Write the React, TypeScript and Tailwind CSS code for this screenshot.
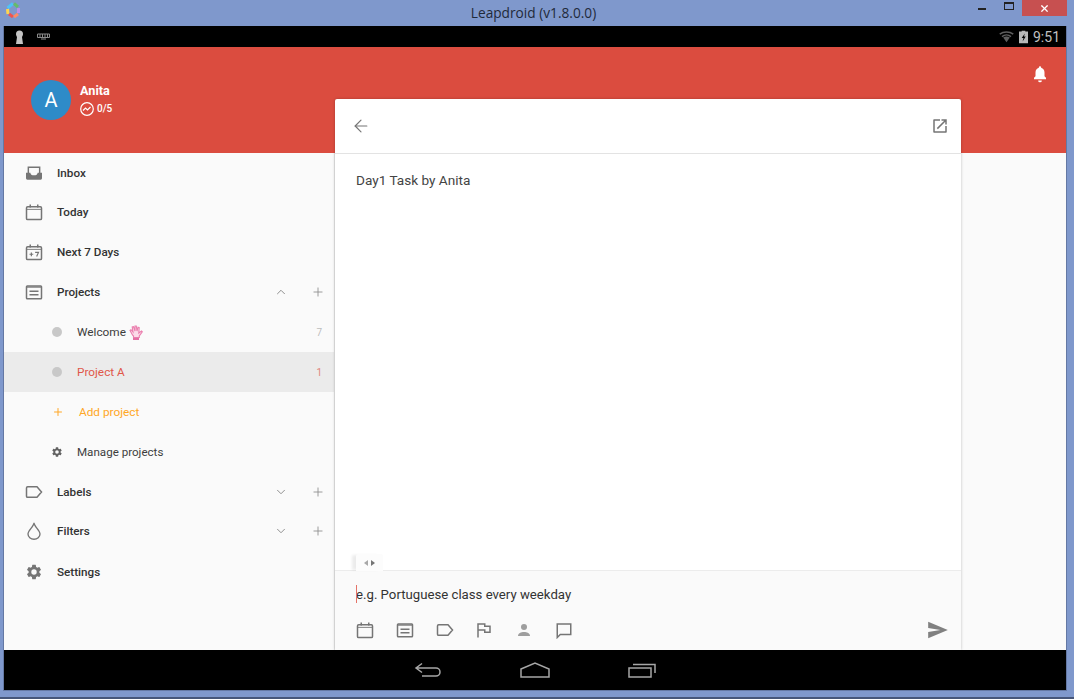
import { ArrowLeft, ChevronDown, ChevronUp, Plus, X } from "lucide-react";
import type { ReactNode } from "react";

const gearPath =
  "M19.14 12.94c.04-.3.06-.61.06-.94s-.02-.64-.07-.94l2.03-1.58a.49.49 0 0 0 .12-.61l-1.92-3.32a.49.49 0 0 0-.59-.22l-2.39.96a7 7 0 0 0-1.62-.94l-.36-2.54a.48.48 0 0 0-.48-.41h-3.84a.47.47 0 0 0-.47.41l-.36 2.54c-.59.24-1.13.57-1.62.94l-2.39-.96a.48.48 0 0 0-.59.22L2.74 8.87a.47.47 0 0 0 .12.61l2.03 1.58c-.05.3-.09.63-.09.94s.02.64.07.94l-2.03 1.58a.49.49 0 0 0-.12.61l1.92 3.32c.12.22.37.29.59.22l2.39-.96c.5.38 1.03.7 1.62.94l.36 2.54c.05.24.24.41.48.41h3.84c.24 0 .44-.17.47-.41l.36-2.54c.59-.24 1.13-.56 1.62-.94l2.39.96c.22.08.47 0 .59-.22l1.92-3.32a.47.47 0 0 0-.12-.61l-2.01-1.58zM12 15.6A3.6 3.6 0 1 1 12 8.4a3.6 3.6 0 0 1 0 7.2z";

function Icon({ size = 18, className = "", children }: { size?: number; className?: string; children: ReactNode }) {
  return (
    <svg width={size} height={size} viewBox="0 0 24 24" fill="none" stroke="currentColor" strokeWidth={2} className={className}>
      {children}
    </svg>
  );
}

const InboxIcon = () => (
  <svg width="20" height="18" viewBox="0 0 27 24" fill="none" stroke="currentColor" strokeWidth={2.2}>
    <path d="M5 13V3.500h17V13" />
    <path d="M1.500 11.500H8c.2 2.500 2 4 5.500 4s5.300-1.500 5.500-4h6.500V20a2 2 0 0 1-2 2h-20a2 2 0 0 1-2-2z" fill="currentColor" stroke="none" />
  </svg>
);

const CalendarIcon = ({ children }: { children?: ReactNode }) => (
  <Icon>
    <rect x="2" y="5" width="20" height="17" rx="1.500" />
    <path d="M2 8.500h20" strokeWidth={1.2} />
    <path d="M7 2v4M17 2v4" />
    {children}
  </Icon>
);

const ProjectsIcon = () => (
  <Icon>
    <rect x="2" y="4" width="20" height="17" rx="1" />
    <path d="M2 5.500h20" strokeWidth={1.5} />
    <path d="M6 11h12M6 15.500h12" />
  </Icon>
);

const LabelIcon = () => (
  <Icon>
    <path d="M3.500 5H16l6 7-6 7H3.500A1.500 1.500 0 0 1 2 17.500v-11A1.500 1.500 0 0 1 3.500 5z" />
  </Icon>
);

const DropIcon = () => (
  <Icon>
    <path d="M12 1C12 6 4 11 4 16a8 7 0 0 0 16 0C20 11 12 6 12 1z" strokeWidth={1.8} />
  </Icon>
);

const GearIcon = ({ size = 18 }: { size?: number }) => (
  <svg width={size} height={size} viewBox="0 0 24 24" fill="currentColor">
    <path d={gearPath} />
  </svg>
);

function NavRow({ icon, label, right, height = "h-10" }: { icon: ReactNode; label: string; right?: ReactNode; height?: string }) {
  return (
    <div className={`flex ${height} items-center pl-[21px] pr-[9px]`}>
      <span className="flex w-[18px] justify-center text-[#757575]">{icon}</span>
      <span className="ml-[14px] flex-1 text-[11.700px] font-medium leading-[16px] text-[#333333]">{label}</span>
      {right}
    </div>
  );
}

function ExpandControls({ open }: { open?: boolean }) {
  return (
    <span className="flex items-center gap-[23px] text-[#8f8f8f]">
      {open ? <ChevronUp size={14} strokeWidth={1.7} /> : <ChevronDown size={14} strokeWidth={1.7} />}
      <Plus size={14} strokeWidth={1.5} />
    </span>
  );
}

function ProjectRow({ label, count, active, children }: { label: string; count: string; active?: boolean; children?: ReactNode }) {
  return (
    <div className={`flex h-10 items-center pl-[48px] pr-[12px] ${active ? "bg-[#ebebeb]" : ""}`}>
      <span className="h-[10px] w-[10px] rounded-full bg-[#c8c8c8]" />
      <span className={`ml-[15px] text-[11.800px] leading-[16px] ${active ? "text-[#e0574a]" : "text-[#3d3d3d]"}`}>{label}</span>
      {children}
      <span className={`ml-auto text-[10px] ${active ? "text-[#e0857c]" : "text-[#bdbdbd]"}`}>{count}</span>
    </div>
  );
}

function Sidebar() {
  return (
    <aside className="w-[331px] shrink-0 border-r border-[#e6e6e6] bg-[#fafafa]">
      <NavRow height="h-[39px]" icon={<InboxIcon />} label="Inbox" />
      <NavRow icon={<CalendarIcon />} label="Today" />
      <NavRow
        icon={
          <CalendarIcon>
            <path d="M6 15h5M8.500 12.500v5M13.500 12.500h4.500l-2.500 5.500" strokeWidth={1.6} />
          </CalendarIcon>
        }
        label="Next 7 Days"
      />
      <NavRow icon={<ProjectsIcon />} label="Projects" right={<ExpandControls open />} />
      <ProjectRow label="Welcome" count="7">
        <svg width="14" height="15" viewBox="0 0 14 15" fill="#fbdbe8" stroke="#ea7fae" strokeWidth="1.1" className="ml-[3px]">
          <path d="M3.500 10 1 5.500l1-.8 2 2.300-.8-5 1.300-.3L6 6V1h1.300L8 6l1-3.800 1.200.4L9.800 8l2.700-2 .8.9-3 4.100v1.500H4.500V11z" />
          <path d="M4 14h6" strokeWidth="1.8" stroke="#e0609a" />
        </svg>
      </ProjectRow>
      <ProjectRow label="Project A" count="1" active />
      <div className="flex h-10 items-center pl-[48px] text-[#ffa726]">
        <Plus size={12} strokeWidth={2} />
        <span className="ml-[15px] text-[11.800px] leading-[16px]">Add project</span>
      </div>
      <div className="flex h-10 items-center pl-[47px]">
        <span className="text-[#616161]">
          <GearIcon size={12} />
        </span>
        <span className="ml-[14px] text-[11.600px] leading-[16px] text-[#3d3d3d]">Manage projects</span>
      </div>
      <NavRow height="h-[39px]" icon={<LabelIcon />} label="Labels" right={<ExpandControls />} />
      <NavRow icon={<DropIcon />} label="Filters" right={<ExpandControls />} />
      <NavRow height="h-[41px]" icon={<GearIcon />} label="Settings" />
    </aside>
  );
}

function TaskCard() {
  return (
    <section className="absolute left-[331px] top-[52px] flex h-[551px] w-[626px] flex-col rounded-t-[2px] bg-white shadow-[0_0_3px_rgba(0,0,0,0.25)]">
      <header className="flex h-[55px] shrink-0 items-center justify-between border-b border-[#e3e3e3] pl-[16px] pr-[12px] text-[#757575]">
        <ArrowLeft size={20} strokeWidth={1.4} />
        <svg width="18" height="18" viewBox="0 0 24 24" fill="currentColor">
          <path d="M19 19H5V5h7V3H4a1 1 0 0 0-1 1v16a1 1 0 0 0 1 1h16a1 1 0 0 0 1-1v-8h-2v7zM14 3v2h3.590l-9.830 9.830 1.410 1.410L19 6.410V10h2V3h-7z" />
        </svg>
      </header>
      <div className="flex-1 pl-[21px] pt-[18px] text-[13.600px] leading-[16px] text-[#444444]">Day1 Task by Anita</div>
      <div className="relative h-[80px] shrink-0 border-t border-[#ececec] bg-[#fafafa]">
        <div className="absolute -top-[17px] left-[21px] flex h-[17px] w-[27px] items-center justify-center gap-[3px] rounded-t-[2px] bg-[#fcfcfc] shadow-[-5px_0_3px_-1px_rgba(0,0,0,0.08)]">
          <span className="h-0 w-0 border-y-[3px] border-r-[4px] border-y-transparent border-r-[#a8a8a8]" />
          <span className="h-0 w-0 border-y-[3px] border-l-[4px] border-y-transparent border-l-[#757575]" />
        </div>
        <div className="relative flex h-[47px] items-center pl-[21px] text-[13.200px] text-[#333333]">
          <span className="absolute left-[21px] top-[14px] h-[18px] w-px bg-[#e57368]" />
          e.g. Portuguese class every weekday
        </div>
        <div className="flex h-6 items-center pl-[21px] pr-[13px] text-[#757575]">
          <span className="flex w-[217px] justify-between">
            <CalendarIcon />
            <ProjectsIcon />
            <LabelIcon />
            <Icon>
              <path d="M4 22V4h9v3h7v8h-7v-3H4" />
            </Icon>
            <svg width="18" height="18" viewBox="0 0 24 24" fill="#9e9e9e">
              <circle cx="12" cy="8" r="4" />
              <path d="M4 20c0-4 4-5.500 8-5.500s8 1.500 8 5.500z" />
            </svg>
            <Icon>
              <path d="M3 4h18v14H7l-4 4z" />
            </Icon>
          </span>
          <svg width="20" height="18" viewBox="0 0 24 22" fill="#808080" className="ml-auto">
            <path d="M0 21 24 11 0 1v7.500L15 11 0 13.500z" />
          </svg>
        </div>
      </div>
    </section>
  );
}

function StatusBar() {
  return (
    <div className="flex h-[21px] shrink-0 items-center bg-black pl-[11px] pr-[6px]">
      <svg width="9" height="14" viewBox="0 0 9 14" fill="#c4c4c4">
        <path d="M1 4a3.500 3.500 0 0 1 7 0c0 1.500-.7 2.300-1 3l1 7H1l1-7c-.3-.7-1-1.500-1-3z" />
      </svg>
      <svg width="13" height="7" viewBox="0 0 13 7" fill="none" stroke="#8a8a8a" strokeWidth="1" className="ml-[13px]">
        <path d="M.5 1h12v3.500H.5zM3 1v3.500M5.500 1v3.500M8 1v3.500M10.500 1v3.500M4 6h5" />
      </svg>
      <svg width="15" height="12" viewBox="0 0 16 12" fill="none" stroke="#5e5e5e" strokeWidth="1.6" className="ml-auto">
        <path d="M.8 3C4.800-.1 11.200-.1 15.200 3M3.200 5.600C6 3.300 10 3.300 12.800 5.600" />
        <path d="M4.500 6.500c2-1.500 5-1.500 7 0L8 11.500z" fill="#5e5e5e" stroke="none" />
      </svg>
      <svg width="9" height="14" viewBox="0 0 10 14" fill="#b8b8b8" className="ml-[5px]">
        <path d="M3 0h4v1h3v13H0V1h3z" />
        <path d="M6.500 3 3 8h2l-1 4 3.500-5.500H5.500z" fill="#000" />
      </svg>
      <span className="ml-[5px] text-[14px] leading-none text-[#c0c0c0]">9:51</span>
    </div>
  );
}

function NavBar() {
  return (
    <div className="flex h-[40px] shrink-0 items-center justify-center gap-[78px] bg-black text-[#a6a6a6]">
      <svg width="28" height="16" viewBox="0 0 28 16" fill="none" stroke="currentColor" strokeWidth="1.5">
        <path d="M8 1.500 2 6l6 4.500M2 6h20c2 0 4 1.500 4 4s-2 4-4 4H8" />
      </svg>
      <svg width="30" height="16" viewBox="0 0 30 16" fill="none" stroke="currentColor" strokeWidth="1.5">
        <path d="M1 7 15 1l14 6v8H1z" />
      </svg>
      <svg width="28" height="15" viewBox="0 0 28 15" fill="none" stroke="currentColor" strokeWidth="1.5">
        <rect x="1" y="5" width="22" height="9" />
        <path d="M5 1.500h22V10" />
      </svg>
    </div>
  );
}

function TitleBar() {
  return (
    <div className="relative flex h-[26px] shrink-0 items-center justify-center bg-[#7f98cc]">
      <svg width="14" height="16" viewBox="0 0 14 16" className="absolute left-[6px] top-[2px]" fill="none" strokeWidth="3">
        <path d="M7 1.500 1.500 6" stroke="#4fc3f7" />
        <path d="M1.500 7 2 12" stroke="#ffd54f" />
        <path d="M3 12 7 15" stroke="#ef5350" />
        <path d="M8 15l4-3" stroke="#ff8a65" />
        <path d="M12.500 11V6" stroke="#ba8fe8" />
        <path d="M12 5 8 1.500" stroke="#66bb6a" />
      </svg>
      <span className="-ml-[7px] font-['Open_Sans',sans-serif] text-[13.700px] leading-none text-[#1f2a3a]">Leapdroid (v1.8.0.0)</span>
      <div className="absolute right-[7px] top-0 flex items-start">
        <span className="mr-[18px] mt-[8px] h-[2px] w-[8px] bg-[#222]" />
        <span className="mr-[8px] mt-[2px] h-[8px] w-[10px] border border-t-2 border-[#222]" />
        <span className="flex h-[16px] w-[45px] items-center justify-center bg-[#c75050] text-white">
          <X size={11} strokeWidth={2.6} />
        </span>
      </div>
    </div>
  );
}

export default function App() {
  return (
    <div className="flex h-[699px] w-[1074px] flex-col overflow-hidden border-b-2 border-[#46567a] bg-[#7f98cc] font-['Roboto',sans-serif]">
      <TitleBar />
      <div className="ml-[4px] flex h-[664px] w-[1062px] flex-col outline outline-1 outline-[#6478a4]">
        <StatusBar />
        <div className="relative flex min-h-0 flex-1 flex-col">
          <div className="relative flex h-[106px] shrink-0 items-start bg-[#db4c3f] pl-[27px] pt-[33px]">
            <div className="flex h-10 w-10 items-center justify-center rounded-full bg-[#2e8bc8] text-[20px] text-white">A</div>
            <div className="ml-[9px] pt-[3px] text-white">
              <div className="text-[12.700px] font-bold leading-[16px]">Anita</div>
              <div className="mt-[3px] flex items-center gap-[3px] text-[10px] font-medium leading-[14px]">
                <svg width="14" height="14" viewBox="0 0 14 14" fill="none" stroke="white" strokeWidth="1.2">
                  <circle cx="7" cy="7" r="6.300" />
                  <path d="M3 8.500 5.500 6l2 2 3-3" />
                </svg>
                0/5
              </div>
            </div>
            <svg width="18" height="18" viewBox="0 0 24 24" fill="white" className="absolute right-[17px] top-[18px]">
              <path d="M12 23a2.500 2.500 0 0 0 2.500-2.500h-5A2.500 2.500 0 0 0 12 23zm8-6-2-2V10c0-3.100-1.600-5.600-4.500-6.300V3a1.500 1.500 0 0 0-3 0v.7C7.600 4.400 6 6.900 6 10v5l-2 2v2h16z" />
            </svg>
          </div>
          <div className="flex min-h-0 flex-1 bg-[#fafafa]">
            <Sidebar />
          </div>
          <TaskCard />
        </div>
        <NavBar />
      </div>
    </div>
  );
}
